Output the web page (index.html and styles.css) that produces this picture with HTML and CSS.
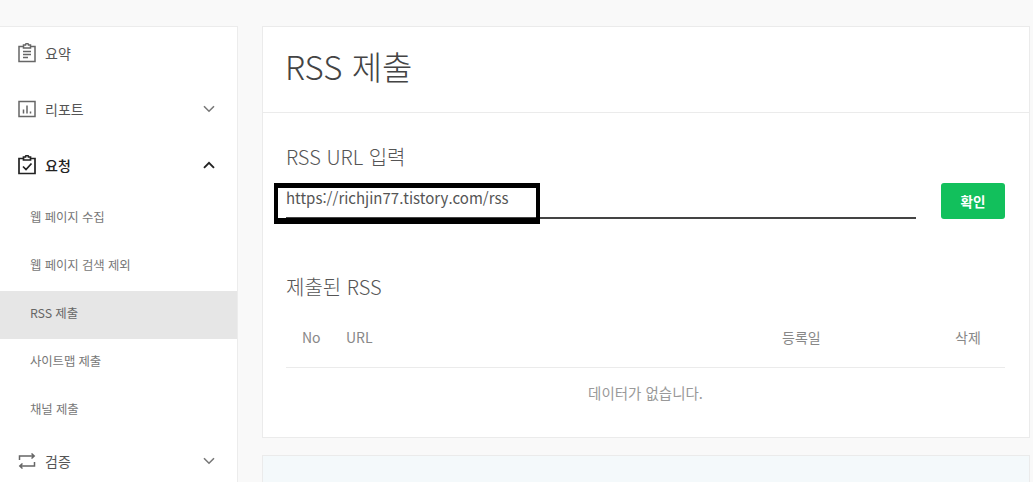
FILE: index.html
```html
<!DOCTYPE html>
<html lang="ko">
<head>
  <meta charset="UTF-8" />
  <title>RSS 제출</title>
  <link rel="stylesheet" href="styles.css">
</head>
<body>
  <!-- Sidebar -->
  <nav class="sidebar">
    <div class="menu-item">
      <svg class="menu-icon" viewBox="0 0 20 20"><path d="M6.500 3.500H2v15h16v-15h-4.500M6.500 2h2a1.500 1.500 0 0 1 3 0h2v3h-7zM6 8.500h8M6 11.500h8M6 14.500h5"/></svg>
      <span>요약</span>
    </div>
    <div class="menu-item">
      <svg class="menu-icon" viewBox="0 0 20 20"><path d="M2 2.500h16v15H2zM6.500 14.500v-4M10 14.500v-8M13.500 14.500v-2"/></svg>
      <span>리포트</span>
      <svg class="chevron" viewBox="0 0 12 8"><path d="M1 1.200l5 5 5-5"/></svg>
    </div>
    <div class="menu-item active">
      <svg class="menu-icon" viewBox="0 0 20 20"><path d="M6.500 3.500H2v15h16v-15h-4.500M6.500 2h2a1.500 1.500 0 0 1 3 0h2v3h-7zM6 11.500l3 3 5.500-6"/></svg>
      <span>요청</span>
      <svg class="chevron" viewBox="0 0 12 8"><path d="M1 6.800l5-5 5 5"/></svg>
    </div>
    <div class="submenu">
      <div class="sub-item">웹 페이지 수집</div>
      <div class="sub-item">웹 페이지 검색 제외</div>
      <div class="sub-item selected">RSS 제출</div>
      <div class="sub-item">사이트맵 제출</div>
      <div class="sub-item">채널 제출</div>
    </div>
    <div class="menu-item">
      <svg class="menu-icon" viewBox="0 0 20 20"><path d="M2.500 9V5H17M14.500 2.500L17.200 5l-2.700 2.500M17.500 11v4H3M5.500 12.500L2.800 15l2.700 2.500"/></svg>
      <span>검증</span>
      <svg class="chevron" viewBox="0 0 12 8"><path d="M1 1.200l5 5 5-5"/></svg>
    </div>
  </nav>

  <!-- Main column -->
  <main class="content">
    <section class="card">
      <h1 class="card-title">RSS 제출</h1>
      <div class="card-body">
        <h2 class="section-title">RSS URL 입력</h2>
        <div class="url-row">
          <div class="url-input">https://richjin77.tistory.com/rss</div>
          <button class="confirm-btn">확인</button>
        </div>
        <h2 class="section-title submitted">제출된 RSS</h2>
        <div class="table-head">
          <span class="col-no">No</span>
          <span class="col-url">URL</span>
          <span class="col-date">등록일</span>
          <span class="col-del">삭제</span>
        </div>
        <div class="table-empty">데이터가 없습니다.</div>
      </div>
    </section>
    <section class="info-card"></section>
  </main>

  <!-- Annotation drawn over the screenshot -->
  <div class="highlight-box"></div>
</body>
</html>
```

FILE: styles.css
```css
body {
  margin: 0;
  height: 482px;
  overflow: hidden;
  background: #f9f9f9;
  font-family: "Noto Sans CJK KR", "Noto Sans", sans-serif;
  color: #444;
  display: flex;
  align-items: flex-start;
  gap: 24px;
  padding-top: 26px;
  box-sizing: border-box;
}

/* Sidebar */
.sidebar {
  width: 238px;
  height: 456px;
  overflow: hidden;
  flex-shrink: 0;
  background: #fff;
  border-top: 1px solid #ececec;
  border-right: 1px solid #ececec;
  box-sizing: border-box;
}

.menu-item {
  height: 56px;
  display: flex;
  align-items: center;
  padding: 0 22px 4px 17px;
  box-sizing: border-box;
  font-size: 14px;
  color: #555;
}

.menu-item span {
  margin-left: 8px;
  flex: 1;
}

.menu-item.active {
  color: #222;
  font-weight: 500;
}

.menu-icon {
  width: 20px;
  height: 20px;
  fill: none;
  stroke: #666;
  stroke-width: 1.500;
}

.active .menu-icon {
  stroke: #222;
  stroke-width: 1.700;
}

.chevron {
  width: 12px;
  height: 8px;
  fill: none;
  stroke: #777;
  stroke-width: 1.600;
}

.active .chevron {
  stroke: #222;
  stroke-width: 1.900;
}

.sub-item {
  height: 48px;
  padding: 0 0 4px 30px;
  box-sizing: border-box;
  display: flex;
  align-items: center;
  font-size: 12.400px;
  letter-spacing: -0.100px;
  color: #777;
}

.sub-item.selected {
  background: #e6e6e6;
  color: #666;
}

/* Main column */
.content {
  width: 768px;
  height: 456px;
  overflow: hidden;
  flex-shrink: 0;
  display: flex;
  flex-direction: column;
  gap: 17px;
}

.card {
  height: 412px;
  flex-shrink: 0;
  background: #fff;
  border: 1px solid #ebebeb;
  box-sizing: border-box;
}

.card-title {
  margin: 0;
  height: 86px;
  padding: 0 0 8px 22px;
  display: flex;
  align-items: center;
  font-size: 33px;
  font-weight: 300;
  color: #444;
  border-bottom: 1px solid #ebebeb;
  box-sizing: border-box;
}

.card-body {
  padding: 29px 24px 0 23px;
}

.section-title {
  margin: 0;
  font-size: 20px;
  line-height: 30px;
  font-weight: 300;
  color: #555;
}

.url-row {
  display: flex;
  align-items: flex-end;
  justify-content: space-between;
  margin-top: 11px;
}

.url-input {
  width: 630px;
  height: 36px;
  line-height: 30px;
  font-size: 15px;
  color: #555;
  border-bottom: 2px solid #444;
  box-sizing: border-box;
}

.confirm-btn {
  width: 64px;
  height: 36px;
  border: 0;
  border-radius: 3px;
  background: #12c05c;
  color: #fff;
  font: 700 13.500px "Noto Sans CJK KR", sans-serif;
  padding: 0;
}

.submitted {
  margin-top: 53px;
}

.table-head {
  display: flex;
  align-items: center;
  height: 61px;
  margin-top: 5px;
  font-size: 14px;
  color: #888;
  border-bottom: 1px solid #ebebeb;
  box-sizing: border-box;
}

.col-no {
  width: 60px;
  padding-left: 16px;
  box-sizing: border-box;
}

.col-url {
  flex: 1;
}

.col-date {
  width: 173px;
}

.col-del {
  width: 50px;
}

.table-empty {
  text-align: center;
  font-size: 14.500px;
  color: #999;
  line-height: 50px;
}

.info-card {
  height: 30px;
  flex-shrink: 0;
  background: #f4f9fb;
  border: 1px solid #ebebeb;
  box-sizing: border-box;
}

/* Annotation */
.highlight-box {
  position: absolute;
  left: 274px;
  top: 183px;
  width: 266px;
  height: 41px;
  border-style: solid;
  border-color: #000;
  border-width: 5px 4px 6px;
  box-sizing: border-box;
}
```
